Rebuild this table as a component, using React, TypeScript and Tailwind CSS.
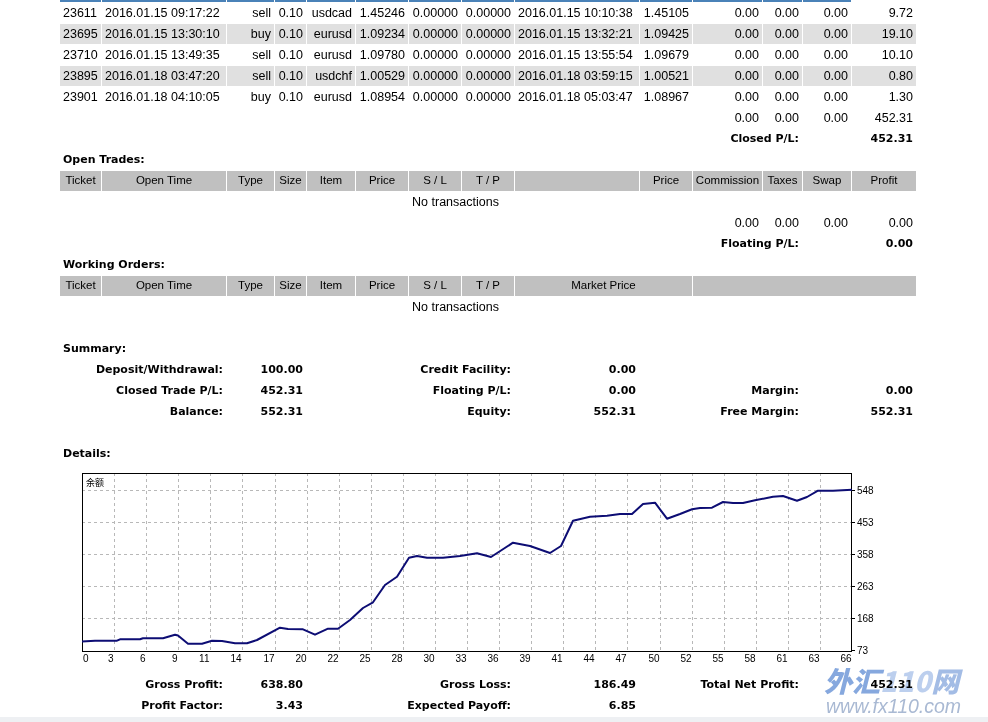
import React from 'react';

// column widths of the statement table (cell box, 1px spacing between)
const COLS = [41, 124, 47, 31, 48, 52, 52, 52, 124, 52, 69, 39, 48, 64];
const LEFT_COLS = [0, 1, 8];

const closed = [
    ['23611', '2016.01.15 09:17:22', 'sell', '0.10', 'usdcad', '1.45246', '0.00000', '0.00000', '2016.01.15 10:10:38', '1.45105', '0.00', '0.00', '0.00', '9.72'],
    ['23695', '2016.01.15 13:30:10', 'buy', '0.10', 'eurusd', '1.09234', '0.00000', '0.00000', '2016.01.15 13:32:21', '1.09425', '0.00', '0.00', '0.00', '19.10'],
    ['23710', '2016.01.15 13:49:35', 'sell', '0.10', 'eurusd', '1.09780', '0.00000', '0.00000', '2016.01.15 13:55:54', '1.09679', '0.00', '0.00', '0.00', '10.10'],
    ['23895', '2016.01.18 03:47:20', 'sell', '0.10', 'usdchf', '1.00529', '0.00000', '0.00000', '2016.01.18 03:59:15', '1.00521', '0.00', '0.00', '0.00', '0.80'],
    ['23901', '2016.01.18 04:10:05', 'buy', '0.10', 'eurusd', '1.08954', '0.00000', '0.00000', '2016.01.18 05:03:47', '1.08967', '0.00', '0.00', '0.00', '1.30'],
];

const td = 'h-[20px] px-[3px] py-0 whitespace-nowrap';
const hd = `h-[20px] px-0 py-0 whitespace-nowrap bg-[#c0c0c0] text-center text-[11.5px]`;
const b = "font-['DejaVu_Sans',sans-serif] font-bold text-[11px]";

const pts: [number, number][] = [
    [82, 641.5], [95, 640.7], [117, 640.7], [120, 639.3], [140, 639.3], [143, 638.3], [163, 638.3],
    [175, 634.7], [178, 635.5], [188, 643.7], [202, 643.7], [212, 640.7], [222, 641], [235, 643.3],
    [247, 643.3], [257, 640], [280, 627.7], [288, 629], [303, 629.3], [315, 634.7], [328, 628.7],
    [338, 628.7], [350, 620], [363, 608], [373, 602.3], [385, 585], [397, 576.7], [409, 557.7],
    [417, 556], [427, 557.7], [443, 557.7], [460, 556], [477, 553.3], [491, 557], [513, 542.7],
    [530, 546], [550, 553], [561, 546], [573, 520.7], [590, 516.7], [607, 515.7], [620, 514],
    [632, 514], [643, 504], [655, 502.7], [667, 518.7], [680, 514], [692, 509.3], [700, 508],
    [712, 507.7], [723, 502], [733, 503], [743, 503], [755, 500.3], [773, 496.7], [783, 496],
    [797, 500.7], [807, 497], [818, 490.7], [833, 490.7], [852, 489.7],
];

const xLabels = ['0', '3', '6', '9', '11', '14', '17', '20', '22', '25', '28', '30', '33', '36', '39', '41', '44', '47', '50', '52', '55', '58', '61', '63', '66'];
const yLabels: [string, number][] = [['548', 490], ['453', 522], ['358', 554], ['263', 586], ['168', 618], ['73', 650]];

const BalanceChart = () => {
    const gx = (k: number) => Math.round(82 + (k * 770) / 24) + 0.5;
    return (
        <svg viewBox="60 465 856 209" width={856} height={209} className="block">
            <g stroke="#b8b8b8" strokeWidth={1} strokeDasharray="3 3">
                {Array.from({ length: 23 }, (_, i) => (
                    <line key={i} x1={gx(i + 1)} x2={gx(i + 1)} y1={473} y2={652} />
                ))}
                {yLabels.slice(0, 5).map(([, y]) => (
                    <line key={y} x1={82} x2={852} y1={y + 0.5} y2={y + 0.5} />
                ))}
            </g>
            <rect x={82.5} y={473.5} width={769} height={178} fill="none" stroke="#000" strokeWidth={1} />
            <polyline
                points={pts.map(p => p.join(',')).join(' ')}
                fill="none"
                stroke="#0d0d74"
                strokeWidth={2}
                strokeLinejoin="round"
            />
            <g fontFamily="'Liberation Sans', Arial, sans-serif" fontSize={10} fill="#000">
                {yLabels.map(([t, y]) => (
                    <g key={t}>
                        <line x1={852} x2={855} y1={y + 0.5} y2={y + 0.5} stroke="#000" strokeWidth={1} />
                        <text x={857} y={y + 3.5}>{t}</text>
                    </g>
                ))}
                {xLabels.map((t, k) => (
                    <text key={t} x={k === 0 ? 83 : gx(k) - 1} y={662} textAnchor={k === 0 ? 'start' : 'end'}>{t}</text>
                ))}
            </g>
            <text x={86} y={485.5} fontSize={9} fontFamily="'Noto Sans CJK SC', sans-serif" fill="#000">余额</text>
        </svg>
    );
};

const SumRow = ({ cells }: { cells: string[] }) => (
    <tr>
        <td colSpan={2} className={`${td} ${b} text-right`}>{cells[0]}</td>
        <td colSpan={2} className={`${td} ${b} text-right`}>{cells[1]}</td>
        <td colSpan={4} className={`${td} ${b} text-right`}>{cells[2]}</td>
        <td className={`${td} ${b} text-right`}>{cells[3]}</td>
        <td colSpan={3} className={`${td} ${b} text-right`}>{cells[4]}</td>
        <td colSpan={2} className={`${td} ${b} text-right`}>{cells[5]}</td>
    </tr>
);

const Title = ({ text }: { text: string }) => (
    <tr>
        <td colSpan={14} className={`${td} ${b}`}>{text}</td>
    </tr>
);

const Blank = () => (
    <tr>
        <td colSpan={14} className={td}></td>
    </tr>
);

export default function App() {
    return (
        <div className="relative w-full h-[722px] overflow-hidden bg-white text-black font-['Liberation_Sans',Arial,sans-serif] text-[12.5px]">
            <table className="table-fixed border-separate border-spacing-[1px] w-[858px] ml-[59px] mt-[-1px]">
                <colgroup>
                    {COLS.map((w, i) => <col key={i} style={{ width: w }} />)}
                </colgroup>
                <tbody>
                    {/* tail of the previous row, cut at the window top */}
                    <tr>
                        {COLS.map((_, i) => (
                            <td key={i} className={`h-[2px] p-0 ${i < 13 ? 'bg-[#4a82b8]' : ''}`}></td>
                        ))}
                    </tr>
                    {closed.map((row, r) => (
                        <tr key={row[0]} className={r % 2 === 1 ? 'bg-[#e0e0e0]' : ''}>
                            {row.map((v, i) => (
                                <td key={i} className={`${td} ${LEFT_COLS.includes(i) ? 'text-left' : 'text-right'}`}>{v}</td>
                            ))}
                        </tr>
                    ))}
                    <tr>
                        <td colSpan={10} className={td}></td>
                        <td className={`${td} text-right`}>0.00</td>
                        <td className={`${td} text-right`}>0.00</td>
                        <td className={`${td} text-right`}>0.00</td>
                        <td className={`${td} text-right`}>452.31</td>
                    </tr>
                    <tr>
                        <td colSpan={10} className={td}></td>
                        <td colSpan={2} className={`${td} ${b} text-right`}>Closed P/L:</td>
                        <td colSpan={2} className={`${td} ${b} text-right`}>452.31</td>
                    </tr>

                    <Title text="Open Trades:" />
                    <tr>
                        {['Ticket', 'Open Time', 'Type', 'Size', 'Item', 'Price', 'S / L', 'T / P', '', 'Price', 'Commission', 'Taxes', 'Swap', 'Profit'].map((h, i) => (
                            <td key={i} className={hd}>{h}</td>
                        ))}
                    </tr>
                    <tr>
                        <td colSpan={13} className={`${td} text-center`}>No transactions</td>
                        <td className={td}></td>
                    </tr>
                    <tr>
                        <td colSpan={10} className={td}></td>
                        <td className={`${td} text-right`}>0.00</td>
                        <td className={`${td} text-right`}>0.00</td>
                        <td className={`${td} text-right`}>0.00</td>
                        <td className={`${td} text-right`}>0.00</td>
                    </tr>
                    <tr>
                        <td colSpan={10} className={td}></td>
                        <td colSpan={2} className={`${td} ${b} text-right`}>Floating P/L:</td>
                        <td colSpan={2} className={`${td} ${b} text-right`}>0.00</td>
                    </tr>

                    <Title text="Working Orders:" />
                    <tr>
                        {['Ticket', 'Open Time', 'Type', 'Size', 'Item', 'Price', 'S / L', 'T / P'].map((h, i) => (
                            <td key={i} className={hd}>{h}</td>
                        ))}
                        <td colSpan={2} className={hd}>Market Price</td>
                        <td colSpan={4} className={hd}></td>
                    </tr>
                    <tr>
                        <td colSpan={13} className={`${td} text-center`}>No transactions</td>
                        <td className={td}></td>
                    </tr>
                    <Blank />

                    <Title text="Summary:" />
                    <SumRow cells={['Deposit/Withdrawal:', '100.00', 'Credit Facility:', '0.00', '', '']} />
                    <SumRow cells={['Closed Trade P/L:', '452.31', 'Floating P/L:', '0.00', 'Margin:', '0.00']} />
                    <SumRow cells={['Balance:', '552.31', 'Equity:', '552.31', 'Free Margin:', '552.31']} />
                    <Blank />

                    <Title text="Details:" />
                    <tr>
                        <td colSpan={14} className="p-0 h-[209px]">
                            <BalanceChart />
                        </td>
                    </tr>
                    <SumRow cells={['Gross Profit:', '638.80', 'Gross Loss:', '186.49', 'Total Net Profit:', '452.31']} />
                    <SumRow cells={['Profit Factor:', '3.43', 'Expected Payoff:', '6.85', '', '']} />
                </tbody>
            </table>
            <div className="h-[12px] bg-[#eef0f3]"></div>

            {/* site watermark over the bottom right corner */}
            <div className="absolute left-[824px] top-[664px] pointer-events-none mix-blend-multiply select-none">
                <div className="font-['Noto_Sans_CJK_SC',sans-serif] text-[28px] leading-[32px] font-black italic whitespace-nowrap">
                    <span className="text-[#86a8de]">外汇</span>
                    <span className="text-[#bccfee]">110</span>
                    <span className="text-[#a3bce5]">网</span>
                </div>
                <div className="font-['Liberation_Sans',Arial,sans-serif] text-[19.5px] leading-[20px] italic text-[#a9b9d3] pl-[2px]">
                    www.fx110.com
                </div>
            </div>
        </div>
    );
}
